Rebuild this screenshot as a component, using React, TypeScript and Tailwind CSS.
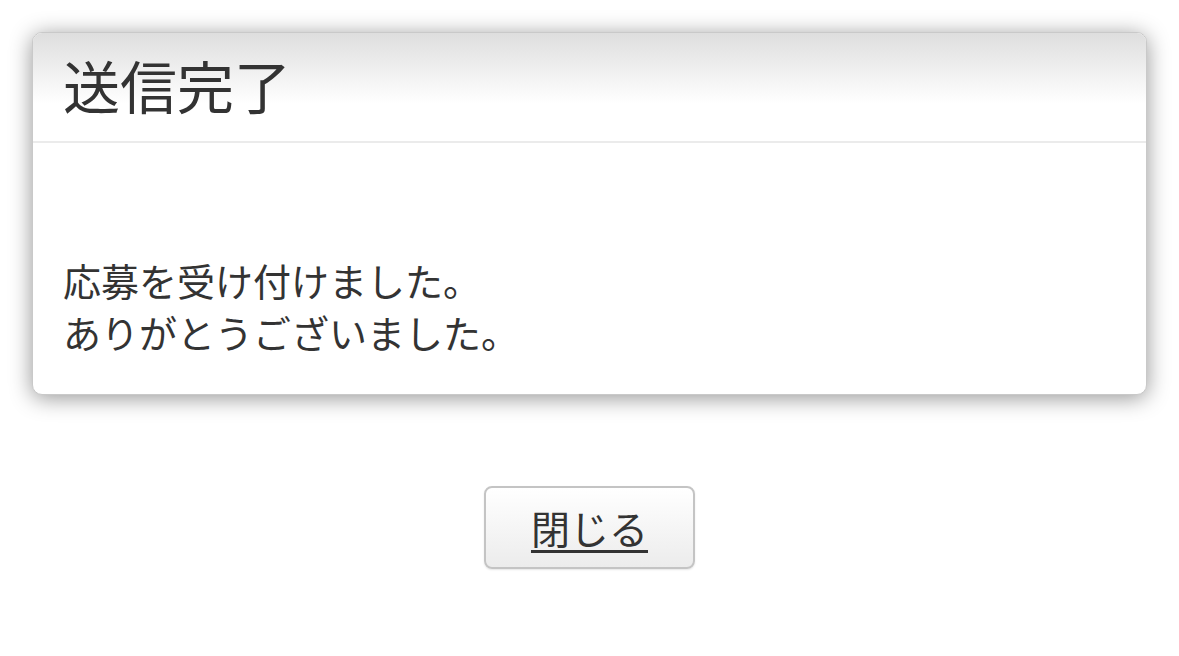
export default function App() {
  const font = { fontFamily: '"Noto Sans CJK JP", "Noto Sans", sans-serif' }
  return (
    <div className="min-h-[656px] bg-white px-8 pt-8 text-[#333]" style={font}>
      {/* Dialog card */}
      <div className="overflow-hidden rounded-[10px] border border-[#c9c9c9] bg-white shadow-[0_3px_22px_rgba(0,0,0,0.42)]">
        <div className="flex h-[110px] items-center border-b-2 border-[#ebebeb] bg-gradient-to-b from-[#dedede] to-white to-[65%] pb-[6px] pl-[30px]">
          <h1 className="text-[57px] leading-none font-normal">送信完了</h1>
        </div>
        <div className="pl-[30px] pt-[111px] pb-[36px] text-[38px] leading-[52px]">
          <p>応募を受け付けました。</p>
          <p>ありがとうございました。</p>
        </div>
      </div>

      {/* Close button */}
      <div className="flex justify-center pt-[91px]">
        <button className="flex h-[83px] w-[211px] items-center justify-center rounded-[8px] border-2 border-[#c4c4c4] bg-gradient-to-b from-white to-[#ececec] text-[39px] text-[#333] underline underline-offset-[6px] shadow-[0_1px_2px_rgba(0,0,0,0.1)]">
          閉じる
        </button>
      </div>
    </div>
  )
}
